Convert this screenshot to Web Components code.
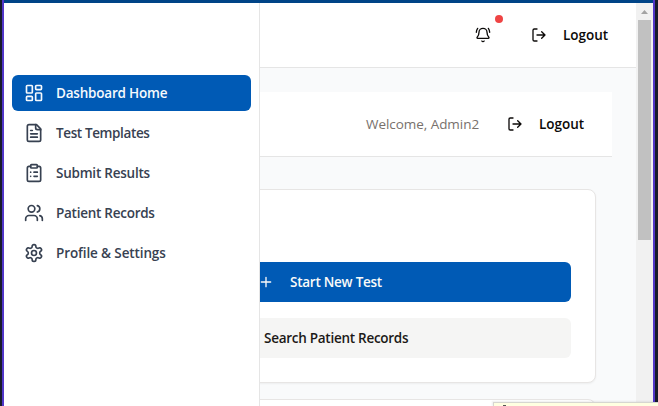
<!DOCTYPE html>
<html lang="en">
<head>
<meta charset="utf-8">
<title>Dashboard</title>
<style>
html,body{margin:0;height:100%;overflow:hidden}
body{font:500 13.5px/20px "Open Sans","Noto Sans",sans-serif;color:#0c0a09}
</style>
</head>
<body>
<app-window></app-window>
<script>
const ICONS = {
  grid: '<rect width="7" height="9" x="3" y="3" rx="1"/><rect width="7" height="5" x="14" y="3" rx="1"/><rect width="7" height="9" x="14" y="12" rx="1"/><rect width="7" height="5" x="3" y="16" rx="1"/>',
  file: '<path d="M15 2H6a2 2 0 0 0-2 2v16a2 2 0 0 0 2 2h12a2 2 0 0 0 2-2V7Z"/><path d="M14 2v4a2 2 0 0 0 2 2h4M10 9H8M16 13H8M16 17H8"/>',
  clipboard: '<rect width="8" height="4" x="8" y="2" rx="1"/><path d="M16 4h2a2 2 0 0 1 2 2v14a2 2 0 0 1-2 2H6a2 2 0 0 1-2-2V6a2 2 0 0 1 2-2h2M12 11h4M12 16h4M8 11h.01M8 16h.01"/>',
  users: '<path d="M16 21v-2a4 4 0 0 0-4-4H6a4 4 0 0 0-4 4v2"/><circle cx="9" cy="7" r="4"/><path d="M22 21v-2a4 4 0 0 0-3-3.87M16 3.13a4 4 0 0 1 0 7.75"/>',
  gear: '<path d="M12.22 2h-.44a2 2 0 0 0-2 2v.18a2 2 0 0 1-1 1.73l-.43.25a2 2 0 0 1-2 0l-.15-.08a2 2 0 0 0-2.73.73l-.22.38a2 2 0 0 0 .73 2.73l.15.1a2 2 0 0 1 1 1.72v.51a2 2 0 0 1-1 1.74l-.15.09a2 2 0 0 0-.73 2.73l.22.38a2 2 0 0 0 2.73.73l.15-.08a2 2 0 0 1 2 0l.43.25a2 2 0 0 1 1 1.73V20a2 2 0 0 0 2 2h.44a2 2 0 0 0 2-2v-.18a2 2 0 0 1 1-1.73l.43-.25a2 2 0 0 1 2 0l.15.08a2 2 0 0 0 2.73-.73l.22-.39a2 2 0 0 0-.73-2.73l-.15-.08a2 2 0 0 1-1-1.74v-.5a2 2 0 0 1 1-1.74l.15-.09a2 2 0 0 0 .73-2.73l-.22-.38a2 2 0 0 0-2.73-.73l-.15.08a2 2 0 0 1-2 0l-.43-.25a2 2 0 0 1-1-1.73V4a2 2 0 0 0-2-2z"/><circle cx="12" cy="12" r="3"/>',
  bell: '<path d="M10.268 21a2 2 0 0 0 3.464 0M22 8c0-2.3-.8-4.3-2-6M3.262 15.326A1 1 0 0 0 4 17h16a1 1 0 0 0 .74-1.673C19.41 13.956 18 12.499 18 8A6 6 0 0 0 6 8c0 4.499-1.411 5.956-2.738 7.326M4 2C2.8 3.7 2 5.7 2 8"/>',
  logout: '<path d="M9 21H5a2 2 0 0 1-2-2V5a2 2 0 0 1 2-2h4M16 17l5-5-5-5M21 12H9"/>',
  plus: '<path d="M5 12h14M12 5v14"/>',
  search: '<circle cx="11" cy="11" r="8"/><path d="m21 21-4.3-4.3"/>'
};
function define(name, html, setup) {
  customElements.define(name, class extends HTMLElement {
    constructor() {
      super();
      this.attachShadow({ mode: 'open' });
      const t = document.createElement('template');
      t.innerHTML = html;
      this.shadowRoot.append(t.content.cloneNode(true));
    }
    connectedCallback() { if (setup) setup(this, this.shadowRoot); }
  });
}
define('line-icon', `<style>:host{display:block;flex:none;width:var(--icon,16px);height:var(--icon,16px)}svg{display:block;width:100%;height:100%}</style>
<svg viewBox="0 0 24 24" fill="none" stroke="currentColor" stroke-width="2" stroke-linecap="round" stroke-linejoin="round"></svg>`,
  (el, root) => { root.querySelector('svg').innerHTML = ICONS[el.getAttribute('name')]; });

define('text-label', `<style>:host{display:block;white-space:nowrap;font-weight:600}</style><slot></slot>`,
  (el) => { el.style.width = el.getAttribute('w') + 'px'; el.style.letterSpacing = (el.getAttribute('ls') || 0) + 'px'; });

define('nav-item', `<style>
:host{display:flex;align-items:center;gap:12px;height:36px;box-sizing:border-box;padding:0 12px;border-radius:6px;color:#374151;--icon:20px}
:host([active]){background:#005ab5;color:#f5f9fd}
</style><slot name="icon"></slot><slot></slot>`);

define('side-nav', `<style>
:host{display:block;box-sizing:border-box;width:256px;background:#fff;border-right:1px solid #e5e5e5;padding:72px 8px 0}
nav{display:grid;gap:4px}
</style><nav>
<nav-item active><line-icon slot="icon" name="grid"></line-icon><text-label ls="-.2">Dashboard Home</text-label></nav-item>
<nav-item><line-icon slot="icon" name="file"></line-icon><text-label ls="-.38">Test Templates</text-label></nav-item>
<nav-item><line-icon slot="icon" name="clipboard"></line-icon><text-label ls="-.23">Submit Results</text-label></nav-item>
<nav-item><line-icon slot="icon" name="users"></line-icon><text-label ls="-.26">Patient Records</text-label></nav-item>
<nav-item><line-icon slot="icon" name="gear"></line-icon><text-label ls="-.12">Profile &amp; Settings</text-label></nav-item>
</nav>`);

define('ghost-button', `<style>:host{display:flex;align-items:center;gap:16px;height:40px;padding:0 12px}</style>
<line-icon name="logout"></line-icon><text-label w="45"><slot></slot></text-label>`);

define('bell-button', `<style>
:host{position:relative;display:grid;place-items:center;width:40px;height:40px}
i{position:absolute;right:0;top:0;width:8px;height:8px;border-radius:50%;background:#ef4444}
</style><line-icon name="bell"></line-icon><i></i>`);

define('page-bar', `<style>
:host{display:flex;align-items:center;justify-content:flex-end;box-sizing:border-box;height:65px;background:#fff;border-bottom:1px solid #e5e5e5;padding-right:16px}
</style><slot></slot>`);

define('welcome-text', `<style>:host{display:block;width:113px;margin-right:16px;white-space:nowrap;font-weight:400;letter-spacing:-.05px;color:#78716c}</style><slot></slot>`);

define('action-button', `<style>
:host{display:flex;align-items:center;justify-content:center;gap:16px;height:40px;border-radius:6px;background:#f5f5f4;color:#1c1917}
:host([primary]){background:#005ab5;color:#fafaf9}
</style><slot></slot>`);

define('panel-card', `<style>
:host{display:block;box-sizing:border-box;height:194px;margin:0 16px;padding:72px 24px 24px;background:#fff;border:1px solid #e7e5e4;border-radius:8px;box-shadow:0 1px 2px #0000000d}
section{display:grid;gap:16px}
</style><section><slot></slot></section>`);

define('scroll-bar', `<style>
:host{display:flex;flex-direction:column;align-items:center;width:17px;background:#f1f1f1}
svg{display:block;width:13px;height:17px;flex:none}
div{width:13px;height:220px;background:#c1c1c1}
</style><svg viewBox="0 0 13 17"><path d="M3 11L6.5 7L10 11Z" fill="#a3a3a3"/></svg><div></div>`);

define('app-window', `<style>
:host{display:grid;position:relative;grid-template-columns:632px 17px;box-sizing:border-box;width:658px;height:406px;overflow:hidden;background:linear-gradient(#5136c8,#5136c8) 2px 0/653px 100% no-repeat #171b2b;padding:0 5px 0 4px}
.top{grid-column:1/-1;height:3px;background:#004487}
main{height:403px;overflow:hidden;background:#f9fafb}
.body{padding:24px 24px 0}
.cards{display:grid;gap:16px;margin-top:32px}
side-nav{position:absolute;left:4px;top:3px;bottom:0}
.tip{position:absolute;left:493px;top:402px;right:0;height:4px;background:#ffffe1;border:1px solid #d6d6d0;border-width:1px 0 0 1px;box-shadow:-1px -1px 2px #0001}
.tip i{position:absolute;left:9px;top:2px;width:3px;height:1px;background:#555}
</style><div class="top"></div>
<main>
<page-bar><bell-button></bell-button><ghost-button style="margin-left:16px">Logout</ghost-button></page-bar>
<div class="body">
<page-bar><welcome-text>Welcome, Admin2</welcome-text><ghost-button>Logout</ghost-button></page-bar>
<div class="cards">
<panel-card><action-button primary><line-icon name="plus"></line-icon><text-label w="92" ls="-.25">Start New Test</text-label></action-button>
<action-button><line-icon name="search"></line-icon><text-label w="144" ls="-.27">Search Patient Records</text-label></action-button></panel-card>
<panel-card></panel-card>
</div></div>
</main>
<scroll-bar></scroll-bar>
<side-nav></side-nav>
<div class="tip"><i></i></div>`);
</script>
</body>
</html>
